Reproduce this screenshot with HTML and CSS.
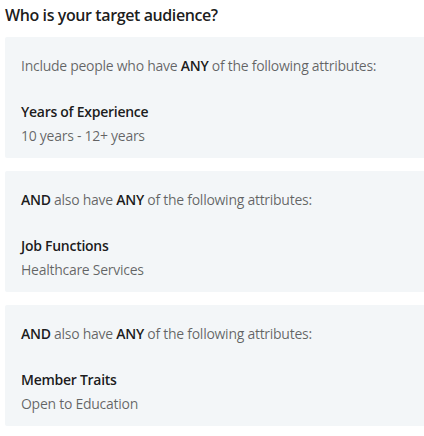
FILE: index.html
```html
<!DOCTYPE html>
<html lang="en">
<head>
<meta charset="utf-8">
<link rel="stylesheet" href="styles.css">
</head>
<body>
<div class="page">
  <h2 class="title">Who is your target audience?</h2>
  <div class="groups">
    <section class="group">
      <p class="rule">Include people who have <b>ANY</b> of the following attributes:</p>
      <div class="attr">
        <div class="attr-name">Years of Experience</div>
        <div class="attr-value">10 years - 12+ years</div>
      </div>
    </section>
    <section class="group">
      <p class="rule"><b>AND</b> also have <b>ANY</b> of the following attributes:</p>
      <div class="attr">
        <div class="attr-name">Job Functions</div>
        <div class="attr-value">Healthcare Services</div>
      </div>
    </section>
    <section class="group">
      <p class="rule"><b>AND</b> also have <b>ANY</b> of the following attributes:</p>
      <div class="attr">
        <div class="attr-name">Member Traits</div>
        <div class="attr-value">Open to Education</div>
      </div>
    </section>
  </div>
</div>
</body>
</html>
```

FILE: styles.css
```css
* { box-sizing: border-box; }
html, body { margin: 0; padding: 0; background: #fff; }
body {
  font-family: "Open Sans", "Noto Sans", "Liberation Sans", sans-serif;
  color: rgba(0, 0, 0, 0.6);
}
.page {
  padding: 4px 0 0 5px;
}
.title {
  margin: 0;
  font-size: 16px;
  font-weight: 600;
  line-height: 22px;
  letter-spacing: -0.4px;
  color: rgba(0, 0, 0, 0.9);
}
.groups {
  margin-top: 11px;
  display: flex;
  flex-direction: column;
  gap: 13px;
}
.group {
  background: #f3f6f8;
  border-radius: 2px 0 0 2px;
  height: 121px;
  padding: 19px 16px 12px 16px;
  letter-spacing: -0.27px;
}
.rule {
  margin: 0;
  font-size: 14px;
  line-height: 20px;
}
.rule b {
  font-weight: 600;
  color: rgba(0, 0, 0, 0.9);
}
.attr {
  margin-top: 26px;
}
.attr-name {
  font-size: 14px;
  line-height: 20px;
  font-weight: 600;
  color: rgba(0, 0, 0, 0.9);
}
.attr-value {
  margin-top: 4px;
  font-size: 14px;
  line-height: 20px;
}
```
